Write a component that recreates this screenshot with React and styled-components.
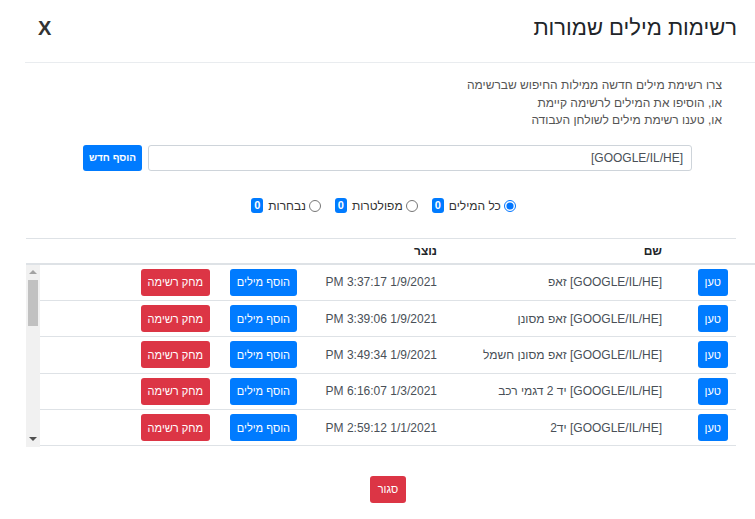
import React from 'react'
import styled, { createGlobalStyle } from 'styled-components'

const GlobalStyle = createGlobalStyle`
  html, body {
    margin: 0;
    padding: 0;
    background: #fff;
  }
  body {
    font-family: "Liberation Sans", Arial, sans-serif;
    color: #212529;
    direction: rtl;
  }
  * { box-sizing: border-box; }
`

const Modal = styled.div`
  margin-left: 25px;
  width: 730px;
  direction: rtl;
`

const Header = styled.div`
  height: 63px;
  padding: 0 18px 6px 13px;
  display: flex;
  align-items: center;
  justify-content: space-between;
  border-bottom: 1px solid #e9ecef;
`

const Title = styled.h5`
  margin: 0;
  font-size: 22px;
  font-weight: 400;
  color: #212529;
`

const CloseX = styled.span`
  font-size: 20px;
  font-weight: 700;
  color: #333;
`

const Intro = styled.div`
  padding: 14px 33px 0 0;
  font-size: 12px;
  line-height: 17.5px;
  color: #555;
`

const InputRow = styled.div`
  margin: 15px 63px 0 58px;
  display: flex;
  gap: 6px;
  height: 26px;
`

const TextInput = styled.input`
  flex: 1;
  height: 26px;
  border: 1px solid #ced4da;
  border-radius: 3px;
  padding: 0 8px;
  font-family: inherit;
  font-size: 12px;
  color: #495057;
  direction: rtl;
  outline: none;
`

const Btn = styled.button`
  height: ${({ $h }) => $h || 27}px;
  padding: 0 ${({ $pad }) => $pad || 7}px;
  border: none;
  border-radius: 3px;
  background: ${({ $variant }) => ($variant === 'danger' ? '#dc3545' : '#007bff')};
  color: #fff;
  font-family: inherit;
  font-size: ${({ $size }) => $size || 11}px;
  font-weight: ${({ $bold }) => ($bold ? 700 : 400)};
  white-space: nowrap;
  cursor: pointer;
`

const RadioRow = styled.div`
  margin-top: 25px;
  height: 20px;
  display: flex;
  justify-content: center;
  align-items: center;
  gap: 14px;
  padding-right: 13px;
  font-size: 12px;
  color: #333;
`

const RadioItem = styled.label`
  display: flex;
  align-items: center;
  gap: 3px;

  input {
    margin: 0;
    width: 12px;
    height: 12px;
  }
`

const Badge = styled.span`
  display: inline-block;
  background: #007bff;
  color: #fff;
  font-weight: 700;
  font-size: 11px;
  line-height: 15px;
  padding: 0 3px;
  border-radius: 3px;
  margin-right: 2px;
`

const TableWrap = styled.div`
  margin: 22px 0 0 1px;
`

const cols = '66px 225px 140px 87px 88px 1fr'

const HeadRow = styled.div`
  position: relative;
  display: grid;
  grid-template-columns: ${cols};
  height: 27px;
  padding-top: 1px;
  padding-right: 19px;
  align-items: center;
  border-bottom: 2px solid #dee2e6;
  font-size: 12px;
  font-weight: 700;

  &::before {
    content: '';
    position: absolute;
    top: 0;
    left: 0;
    right: 19px;
    height: 1px;
    background: #dee2e6;
  }
`

const HeadCell = styled.div`
  padding-right: 8px;
`

const ScrollArea = styled.div`
  display: flex;
  height: 182px;
  margin-right: 19px;
`

const Scroller = styled.div`
  flex: 1;
  overflow-y: auto;
  scrollbar-width: none;

  &::-webkit-scrollbar {
    display: none;
  }
`

const Bar = styled.div`
  width: 14px;
  display: flex;
  flex-direction: column;
  background: #f1f1f1;
`

const Arrow = styled.div`
  height: 15px;
  display: flex;
  align-items: center;
  justify-content: center;

  &::after {
    content: '';
    border-left: 4px solid transparent;
    border-right: 4px solid transparent;
    ${({ $down }) =>
      $down
        ? 'border-top: 4px solid #505050;'
        : 'border-bottom: 4px solid #a3a3a3;'}
  }
`

const Track = styled.div`
  flex: 1;
  padding: 0 2px;
`

const Thumb = styled.div`
  height: 46px;
  background: #c1c1c1;
`

const Row = styled.div`
  display: grid;
  grid-template-columns: ${cols};
  height: 36.4px;
  align-items: center;
  border-bottom: 1px solid #dee2e6;
  font-size: 12px;
  color: #495057;
`

const Cell = styled.div`
  padding-right: 8px;
  white-space: nowrap;
  overflow: hidden;
`

const Footer = styled.div`
  margin-top: 29px;
  display: flex;
  justify-content: center;
  padding-right: 4px;
`

const lists = [
  ['[GOOGLE/IL/HE] זאפ', '1/9/2021 3:37:17 PM'],
  ['[GOOGLE/IL/HE] זאפ מסונן', '1/9/2021 3:39:06 PM'],
  ['[GOOGLE/IL/HE] זאפ מסונן חשמל', '1/9/2021 3:49:34 PM'],
  ['[GOOGLE/IL/HE] יד 2 דגמי רכב', '1/3/2021 6:16:07 PM'],
  ['[GOOGLE/IL/HE] יד2', '1/1/2021 2:59:12 PM'],
  ['[GOOGLE/IL/HE] רכב חשמלי', '12/30/2020 11:20:41 AM'],
  ['[GOOGLE/IL/HE] ביטוח רכב', '12/28/2020 4:05:19 PM'],
  ['[GOOGLE/IL/HE] השכרת רכב', '12/27/2020 10:12:55 AM'],
  ['[GOOGLE/IL/HE] מכוניות יד שניה', '12/24/2020 1:44:02 PM'],
  ['[GOOGLE/IL/HE] ליסינג', '12/22/2020 9:31:38 AM'],
  ['[GOOGLE/IL/HE] צמיגים', '12/20/2020 5:58:21 PM'],
  ['[GOOGLE/IL/HE] מוסך', '12/17/2020 3:16:47 PM'],
  ['[GOOGLE/IL/HE] טרייד אין', '12/15/2020 12:02:09 PM'],
  ['[GOOGLE/IL/HE] רכב משפחתי', '12/13/2020 8:47:30 AM'],
  ['[GOOGLE/IL/HE] ג׳יפים', '12/10/2020 7:25:14 PM'],
  ['[GOOGLE/IL/HE] אופנועים', '12/8/2020 2:39:50 PM'],
]

export default function App() {
  return (
    <>
      <GlobalStyle />
      <Modal>
        <Header>
          <Title>רשימות מילים שמורות</Title>
          <CloseX>X</CloseX>
        </Header>

        <Intro>
          <div>צרו רשימת מילים חדשה ממילות החיפוש שברשימה</div>
          <div>או, הוסיפו את המילים לרשימה קיימת</div>
          <div>או, טענו רשימת מילים לשולחן העבודה</div>
        </Intro>

        <InputRow>
          <TextInput defaultValue="[GOOGLE/IL/HE]" />
          <Btn $h={26} $bold $size={10} $pad={6}>הוסף חדש</Btn>
        </InputRow>

        <RadioRow>
          <RadioItem>
            <input type="radio" name="filter" defaultChecked />
            כל המילים <Badge>0</Badge>
          </RadioItem>
          <RadioItem>
            <input type="radio" name="filter" />
            מפולטרות <Badge>0</Badge>
          </RadioItem>
          <RadioItem>
            <input type="radio" name="filter" />
            נבחרות <Badge>0</Badge>
          </RadioItem>
        </RadioRow>

        <TableWrap>
          <HeadRow>
            <HeadCell />
            <HeadCell>שם</HeadCell>
            <HeadCell>נוצר</HeadCell>
            <HeadCell />
            <HeadCell />
            <HeadCell />
          </HeadRow>
          <ScrollArea>
            <Scroller>
              {lists.map(([name, created]) => (
                <Row key={name}>
                  <Cell><Btn>טען</Btn></Cell>
                  <Cell>{name}</Cell>
                  <Cell>{created}</Cell>
                  <Cell><Btn>הוסף מילים</Btn></Cell>
                  <Cell><Btn $variant="danger">מחק רשימה</Btn></Cell>
                  <Cell />
                </Row>
              ))}
            </Scroller>
            <Bar>
              <Arrow />
              <Track><Thumb /></Track>
              <Arrow $down />
            </Bar>
          </ScrollArea>
        </TableWrap>

        <Footer>
          <Btn $variant="danger" $pad={8}>סגור</Btn>
        </Footer>
      </Modal>
    </>
  )
}
